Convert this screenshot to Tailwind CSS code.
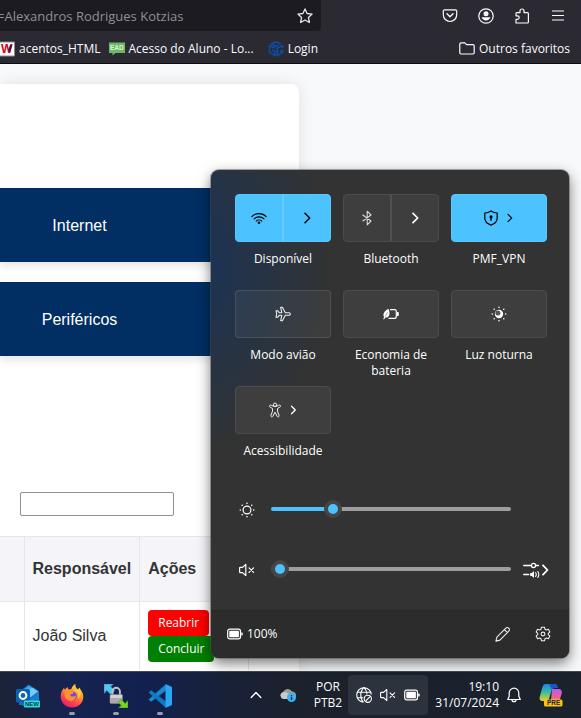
<!DOCTYPE html>
<html lang="pt-BR">
<head>
<meta charset="utf-8">
<meta name="viewport" content="width=device-width, initial-scale=1">
<title>Central de chamados</title>
<script src="https://cdn.jsdelivr.net/npm/@tailwindcss/browser@4"></script>
</head>
<body class="relative flex h-screen flex-col overflow-hidden bg-[#f8f9fa] font-['Open_Sans','Noto_Sans',sans-serif] text-xs">

<!-- Browser toolbar -->
<header class="shrink-0 border-b border-[#0c0c0d] bg-[#2b2a33] text-[#fbfbfe]">
  <div class="flex h-[31px] items-start justify-between pr-[15px]">
    <div class="flex h-[31px] w-[321px] items-center justify-between rounded-br bg-[#1c1b22] pr-2">
      <span class="-ml-[3px] text-[13px] leading-4 text-[#8f8f96]">=Alexandros Rodrigues Kotzias</span>
      <button aria-label="Adicionar aos favoritos">
        <svg class="size-4" viewBox="0 0 16 16" fill="none" stroke="#e4e4e8" stroke-width="1.3" stroke-linejoin="round"><path d="M8 .9l2.1 4.6 5 .6-3.7 3.4 1 5L8 12l-4.400 2.500 1-5L.9 6.100l5-.6z"/></svg>
      </button>
    </div>
    <div class="flex h-[31px] items-center gap-5">
      <button aria-label="Pocket"><svg class="size-4" viewBox="0 0 16 16" fill="none" stroke="#fbfbfe" stroke-width="1.2" stroke-linecap="round" stroke-linejoin="round"><path d="M2.600 1.800h10.800a1.300 1.300 0 0 1 1.300 1.300v3.700a6.700 6.700 0 0 1-13.400 0V3.100a1.300 1.300 0 0 1 1.300-1.300z"/><path d="M5 5.800l3 2.900 3-2.900" stroke-width="1.400"/></svg></button>
      <button aria-label="Conta"><svg class="size-4" viewBox="0 0 16 16"><circle cx="8" cy="8" r="7.200" fill="none" stroke="#fbfbfe" stroke-width="1.200"/><circle cx="8" cy="5.800" r="2.500" fill="#fbfbfe"/><path d="M3.500 9.300h9a4.800 4.800 0 0 1-9 0z" fill="#fbfbfe"/></svg></button>
      <button aria-label="Extensões"><svg class="size-4" viewBox="0 0 16 16" fill="none" stroke="#fbfbfe" stroke-width="1.200" stroke-linejoin="round"><path d="M2 15v-3.600h1.400a1.800 1.800 0 0 0 0-3.600H2V5.600c0-.6.4-1 1-1h3V3a2 2 0 0 1 4 0v1.600h3.400c.6 0 1 .4 1 1V14c0 .6-.4 1-1 1z"/></svg></button>
      <button aria-label="Menu"><svg class="size-4" viewBox="0 0 16 16" stroke="#fbfbfe" stroke-width="1.200"><path d="M2 3h12M2 7.500h12M2 12h12"/></svg></button>
    </div>
  </div>
  <nav class="flex h-8 items-center pr-[11px] pt-1 leading-4">
    <a href="#" class="flex items-center gap-1">
      <svg class="h-4 w-[15px]" viewBox="0 0 15 16"><path d="M-1 1h15.500v14H-1z" fill="#fff" stroke="#8b8b90"/><text x="1" y="12" font-family="Liberation Sans" font-weight="700" font-size="12" fill="#e2001a">W</text><path d="M8.300 8.500L9.800 12l2.700-8.300h-2.300z" fill="#3b1535"/></svg>
      acentos_HTML
    </a>
    <a href="#" class="ml-2 flex items-center gap-1">
      <svg class="size-4" viewBox="0 0 16 16"><path d="M0 1.500h16V12H6.500L3.500 14.500V12H0z" fill="#6db865"/><text x="1" y="9.300" font-family="Liberation Sans" font-weight="700" font-size="6.500" fill="#dff2dc">EAD</text></svg>
      Acesso do Aluno - Lo...
    </a>
    <a href="#" class="ml-[14px] flex items-center gap-1">
      <svg class="size-4" viewBox="0 0 16 16" fill="none" stroke="#0b4fae" stroke-width="1.500" stroke-linejoin="round"><path d="M12.800 3L8 .900 3.200 3 8 5.200l2.400-1.100M7 7.200L1.500 4.600v6.700L7 14.600V10.500L4 9M14.600 7V4.600L9.300 7.200v7.400l5.300-3.300V9.200L12 10.500"/></svg>
      Login
    </a>
    <a href="#" class="ml-auto flex items-center gap-1">
      <svg class="size-4" viewBox="0 0 16 16" fill="none" stroke="#fbfbfe" stroke-width="1.200" stroke-linejoin="round"><path d="M2 1.800h3.800l1.800 1.800H14c.7 0 1.200.5 1.200 1.200v7c0 .7-.5 1.200-1.200 1.200H2c-.7 0-1.200-.5-1.200-1.200V3c0-.7.5-1.200 1.200-1.200z"/></svg>
      Outros favoritos
    </a>
  </nav>
</header>

<!-- Page content -->
<main class="min-h-0 flex-1 overflow-hidden pt-5 font-['Liberation_Sans',Arial,sans-serif] text-base text-[#333]">
  <section class="min-h-full w-[299px] rounded-tr-lg bg-white pt-[104px] shadow-[0_0_15px_rgba(0,0,0,0.1)]">
    <div class="mr-5 flex flex-col gap-5 text-white">
      <a href="#" class="flex h-[74px] items-center justify-center bg-[#012e63] pt-0.5 pr-[120px] shadow-[0_4px_8px_rgba(0,0,0,0.1)]">Internet</a>
      <a href="#" class="flex h-[74px] items-center justify-center bg-[#012e63] pt-0.5 pr-[120px] shadow-[0_4px_8px_rgba(0,0,0,0.1)]">Periféricos</a>
    </div>
    <input type="text" aria-label="Pesquisar" class="mt-[136px] ml-5 block h-6 w-[154px] rounded-xs border border-[#8f8f9d] bg-white px-1 text-sm">
    <table class="mt-5 w-full border-collapse text-left">
      <thead>
        <tr class="h-[65px] bg-[#f4f4f9]">
          <th class="w-6 border-y border-[#e6e6ea]"></th>
          <th class="w-[115px] border border-[#e6e6ea] px-2">Responsável</th>
          <th class="w-[109px] border border-[#e6e6ea] px-2">Ações</th>
          <th class="border-y border-[#e6e6ea]"></th>
        </tr>
      </thead>
      <tbody>
        <tr class="bg-white">
          <td></td>
          <td class="border-x border-[#e6e6ea] px-2">João Silva</td>
          <td class="border-x border-[#e6e6ea] p-2">
            <div class="flex flex-col items-start font-['Open_Sans','Noto_Sans',sans-serif] text-xs text-white">
              <button class="h-[26px] rounded bg-[#ff0000] px-[10px]">Reabrir</button>
              <button class="h-[26px] rounded bg-[#008000] px-[10px]">Concluir</button>
            </div>
          </td>
          <td></td>
        </tr>
      </tbody>
    </table>
  </section>
</main>

<!-- Quick settings flyout -->
<aside class="absolute right-3 bottom-[60px] w-[358px] overflow-hidden rounded-lg bg-[#323332] bg-[radial-gradient(ellipse_140px_190px_at_-20px_95px,#1c3354_0%,#1c3354_10%,#323332_100%)] text-white shadow-[0_0_0_1px_rgba(90,90,90,0.5),0_5px_14px_rgba(0,0,0,0.55)]">
  <div class="grid auto-rows-[96px] grid-cols-3 gap-x-3 pt-6 pr-[22px] pl-6 text-center leading-4">
    <div>
      <div class="flex h-12 overflow-hidden rounded border border-[#5ec6fd] bg-[#4cc2ff] text-black">
        <button aria-label="Wi-Fi" class="flex flex-1 items-center justify-center border-r-2 border-[#66cbff]">
          <svg class="size-4" viewBox="0 0 16 16" fill="none" stroke="currentColor" stroke-width="1.100" stroke-linecap="round"><path d="M.8 6.600a10.200 10.200 0 0 1 14.400 0M3 8.900a7.100 7.100 0 0 1 10 0M5.200 11.100a4 4 0 0 1 5.600 0"/><circle cx="8" cy="12.700" r="1.300" fill="currentColor" stroke="none"/></svg>
        </button>
        <button aria-label="Redes Wi-Fi" class="flex flex-1 items-center justify-center">
          <svg class="size-4" viewBox="0 0 16 16" fill="none" stroke="currentColor" stroke-width="1.500" stroke-linecap="round" stroke-linejoin="round"><path d="M6 3.300L10.700 8 6 12.700"/></svg>
        </button>
      </div>
      <p class="mt-[9px]">Disponível</p>
    </div>
    <div>
      <div class="flex h-12 overflow-hidden rounded border border-[#4b4c4b] bg-[#3d3e3d]">
        <button aria-label="Bluetooth" class="flex flex-1 items-center justify-center border-r-2 border-[#4f504f]">
          <svg class="size-4" viewBox="0 0 16 16" fill="none" stroke="#d8d8d8" stroke-width="1.100" stroke-linejoin="round"><path d="M3.500 4.800L12 11 8.200 14.800V1.200L12 5l-8.500 6.200"/></svg>
        </button>
        <button aria-label="Dispositivos Bluetooth" class="flex flex-1 items-center justify-center">
          <svg class="size-4" viewBox="0 0 16 16" fill="none" stroke="currentColor" stroke-width="1.700" stroke-linecap="round" stroke-linejoin="round"><path d="M6 3.300L10.700 8 6 12.700"/></svg>
        </button>
      </div>
      <p class="mt-[9px]">Bluetooth</p>
    </div>
    <div>
      <button aria-label="VPN" class="flex h-12 w-full items-center justify-center gap-1 rounded border border-[#5ec6fd] bg-[#4cc2ff] pl-1 text-black">
        <svg class="size-4" viewBox="0 0 16 16" fill="none" stroke="currentColor" stroke-width="1.200" stroke-linejoin="round"><path d="M8 .9c1.800 1.300 3.700 2 6.200 2.100V8c0 3.300-2.200 5.700-6.200 7.100C4 13.700 1.800 11.300 1.800 8V3C4.300 2.900 6.200 2.200 8 .9z"/><circle cx="8" cy="6.700" r="1.500" fill="currentColor" stroke="none"/><path d="M8 7v3.700" stroke-width="1.400"/></svg>
        <svg class="size-4" viewBox="0 0 16 16" fill="none" stroke="currentColor" stroke-width="1.100" stroke-linecap="round" stroke-linejoin="round"><path d="M5 4.300L8.700 8 5 11.700"/></svg>
      </button>
      <p class="mt-[9px]">PMF_VPN</p>
    </div>
    <div>
      <button aria-label="Modo avião" class="flex h-12 w-full items-center justify-center rounded border border-white/10 bg-white/5">
        <svg class="size-4" viewBox="0 0 16 16" fill="none" stroke="#f0f0f0" stroke-width="1.100" stroke-linejoin="round"><path d="M14 6.700H10.300L7.400 1.300H5.700L6.800 6.700H4.200L2.600 4.700H1L1.700 8 1 11.300h1.600l1.600-2h2.600l-1.100 5.400h1.700l2.900-5.400H14a1.300 1.300 0 0 0 0-2.600z"/></svg>
      </button>
      <p class="mt-[9px]">Modo avião</p>
    </div>
    <div>
      <button aria-label="Economia de bateria" class="flex h-12 w-full items-center justify-center rounded border border-[#4b4c4b] bg-[#3d3e3d]">
        <svg class="size-4" viewBox="0 0 16 16" fill="none" stroke="#fff" stroke-width="1.200"><path d="M7 3.600h4.600c1 0 1.700.7 1.700 1.700v5.400c0 1-.7 1.700-1.700 1.700H5.500"/><path d="M14 6h.8c.6 0 1 .4 1 1v2c0 .6-.4 1-1 1H14z" fill="#fff" stroke="none"/><path d="M5.300 2.700C2 4.500.4 6.800.4 9c0 .8.300 1.500.7 2L.2 13l.8.500 1.200-1.800c2.900.2 4.300-1.700 4.300-4.400 0-1.800-.5-3.300-1.200-4.600z" fill="#fff" stroke="none"/><path d="M2.200 10.800L4.600 6.300" stroke="#777" stroke-width=".6"/></svg>
      </button>
      <p class="mt-[9px]">Economia de bateria</p>
    </div>
    <div>
      <button aria-label="Luz noturna" class="flex h-12 w-full items-center justify-center rounded border border-[#4b4c4b] bg-[#3d3e3d]">
        <svg class="size-4" viewBox="0 0 16 16"><circle cx="8" cy="8" r="4.200" fill="#fff"/><circle cx="6.900" cy="6.900" r="2.500" fill="#555"/><g fill="#fff"><circle cx="8" cy="1.300" r=".8"/><circle cx="8" cy="14.700" r=".8"/><circle cx="1.300" cy="8" r=".8"/><circle cx="14.700" cy="8" r=".8"/><circle cx="3.200" cy="3.200" r=".8"/><circle cx="12.800" cy="3.200" r=".8"/><circle cx="3.200" cy="12.800" r=".8"/><circle cx="12.800" cy="12.800" r=".8"/></g></svg>
      </button>
      <p class="mt-[9px]">Luz noturna</p>
    </div>
    <div>
      <button aria-label="Acessibilidade" class="flex h-12 w-full items-center justify-center gap-[2px] rounded border border-[#4b4c4b] bg-[#3d3e3d] pl-0.5">
        <svg class="size-4" viewBox="0 0 16 16" fill="none" stroke="#f0f0f0" stroke-width="1" stroke-linejoin="round"><circle cx="8" cy="2.800" r="1.700"/><path d="M2.600 3.600c.4-.7 1-.7 1.700-.3 2.300 1.500 5.100 1.500 7.400 0 .7-.4 1.300-.4 1.700.3s.1 1.200-.5 1.500L10.500 6.500v2.600l1.600 4.500c.3 1.300-1.500 1.800-2 .6L8 10.200l-2.100 4c-.5 1.200-2.300.7-2-.6l1.600-4.500V6.500L3.100 5.100c-.6-.3-.9-.8-.5-1.500z"/></svg>
        <svg class="size-4" viewBox="0 0 16 16" fill="none" stroke="currentColor" stroke-width="1.300" stroke-linecap="round" stroke-linejoin="round"><path d="M6.500 4.200L10.300 8 6.500 11.800"/></svg>
      </button>
      <p class="mt-[9px]">Acessibilidade</p>
    </div>
  </div>

  <div class="flex flex-col gap-1 pb-3 pl-7">
    <div class="flex h-14 items-center">
      <svg class="size-4" viewBox="0 0 16 16" fill="#fff"><circle cx="8" cy="8" r="3.900" fill="none" stroke="#fff" stroke-width="1.200"/><circle cx="8" cy="1.300" r=".8"/><circle cx="8" cy="14.700" r=".8"/><circle cx="1.300" cy="8" r=".8"/><circle cx="14.700" cy="8" r=".8"/><circle cx="3.200" cy="3.200" r=".8"/><circle cx="12.800" cy="3.200" r=".8"/><circle cx="3.200" cy="12.800" r=".8"/><circle cx="12.800" cy="12.800" r=".8"/></svg>
      <input type="range" min="0" max="100" value="24" aria-label="Brilho" style="background-image:linear-gradient(to right,#4cc2ff 26%,#9e9e9e 26%)" class="mb-0.5 ml-4 h-1 w-60 appearance-none rounded-full [&::-webkit-slider-thumb]:size-[18px] [&::-webkit-slider-thumb]:appearance-none [&::-webkit-slider-thumb]:rounded-full [&::-webkit-slider-thumb]:border-4 [&::-webkit-slider-thumb]:border-[#454545] [&::-webkit-slider-thumb]:bg-[#4cc2ff]">
    </div>
    <div class="flex h-14 items-center">
      <svg class="size-4" viewBox="0 0 16 16" fill="none" stroke="#fff" stroke-width="1.200" stroke-linecap="round" stroke-linejoin="round"><path d="M6.800 2.500v11L3.500 10.600H1.200c-.4 0-.6-.2-.6-.6V6c0-.4.2-.6.6-.6h2.300zM10 5.800l4.600 4.600M14.600 5.800L10 10.400"/></svg>
      <input type="range" min="0" max="100" value="0" aria-label="Volume" style="background-image:linear-gradient(to right,#4cc2ff 0%,#9e9e9e 0%)" class="mb-0.5 ml-4 h-1 w-60 appearance-none rounded-full [&::-webkit-slider-thumb]:size-[18px] [&::-webkit-slider-thumb]:appearance-none [&::-webkit-slider-thumb]:rounded-full [&::-webkit-slider-thumb]:border-4 [&::-webkit-slider-thumb]:border-[#454545] [&::-webkit-slider-thumb]:bg-[#4cc2ff]">
      <button aria-label="Saída de som" class="ml-3">
        <svg class="h-4 w-[26px]" viewBox="0 0 26 16" fill="none" stroke="#fff" stroke-width="1.300" stroke-linecap="round" stroke-linejoin="round"><path d="M.7 3.500H8M13 3.500h2.500M.7 12.500h5"/><circle cx="10.500" cy="3.500" r="2.100"/><path d="M7.200 11v3h1.600l2.200 2V9l-2.200 2z" fill="#fff" stroke="none"/><path d="M12.600 10.500c.8 1.200.8 2.800 0 4M14.800 9.500c1.200 1.800 1.200 4.200 0 6" stroke-width="1.100"/><path d="M20 3.300L24.500 8 20 12.700" stroke-width="1.800"/></svg>
      </button>
    </div>
  </div>

  <footer class="flex h-12 items-center border-t border-[#282928] bg-[#2b2c2b] pr-[18px] pb-0.5 pl-4">
    <svg class="h-3 w-4" viewBox="0 0 16 12" fill="none" stroke="#fff" stroke-width="1.200"><rect x=".7" y="1.200" width="12.800" height="9.600" rx="2"/><rect x="2.300" y="2.800" width="9.600" height="6.400" rx=".6" fill="#fff" stroke="none"/><path d="M14.200 4.500h.5c.6 0 1 .4 1 1v1c0 .6-.4 1-1 1h-.5z" fill="#fff" stroke="none"/></svg>
    <span class="ml-1 leading-4">100%</span>
    <button aria-label="Editar configurações rápidas" class="ml-auto"><svg class="size-4" viewBox="0 0 16 16" fill="none" stroke="#eee" stroke-width="1.100" stroke-linejoin="round"><path d="M.9 15.100l1-4 8.900-8.900a2 2 0 0 1 3 3l-8.900 8.900zM9.400 3.600l3 3"/></svg></button>
    <button aria-label="Configurações" class="ml-6"><svg class="size-4" viewBox="0 0 16 16" fill="none" stroke="#eee" stroke-width="1.100" stroke-linejoin="round"><circle cx="8" cy="8" r="1.900"/><path d="M6.500 1.200h3l.5 2.100 1.300.7 2.100-.7 1.500 2.600-1.600 1.500v1.200l1.600 1.500-1.500 2.600-2.100-.7-1.300.7-.5 2.100h-3L6 12.700 4.700 12l-2.100.7-1.500-2.600 1.600-1.500V7.400L1.100 5.900l1.500-2.600 2.100.7L6 3.300z"/></svg></button>
  </footer>
</aside>

<!-- Taskbar -->
<footer class="flex h-[47px] shrink-0 items-center border-t border-[#414a52] bg-[linear-gradient(to_right,#1c2238_0%,#172350_12%,#11204e_25%,#19213a_38%,#1b212d_50%,#1b222c_100%)] pr-[18px] pl-4 text-white">
  <div class="flex h-full gap-5">
    <button aria-label="Outlook" class="flex w-6 flex-col items-center pt-3">
      <svg class="size-6" viewBox="0 0 24 24"><path d="M3 8L12.500.5 23 7v14H3z" fill="#1171c4"/><path d="M7 6l6-4.500 9 6-8 6z" fill="#35a9ec"/><path d="M12 5l5-1 5 3.500-8 6z" fill="#70cdf6"/><path d="M23 8v14H6z" fill="#167fd3"/><rect y="5" width="14" height="13.500" rx="1.500" fill="#0963b4"/><circle cx="7" cy="11.500" r="3.400" fill="none" stroke="#fff" stroke-width="2"/><rect x="8" y="16.500" width="16" height="7" rx="1" fill="#35d9da"/><text x="9" y="22.200" font-family="Liberation Sans" font-weight="700" font-size="6" fill="#003c48">NEW</text></svg>
    </button>
    <button aria-label="Firefox" class="flex w-6 flex-col items-center gap-1 pt-3">
      <svg class="size-6" viewBox="0 0 24 24"><defs><linearGradient id="fx" x1=".8" y1="0" x2=".3" y2="1"><stop offset="0" stop-color="#ffe34d"/><stop offset=".4" stop-color="#ff9a2a"/><stop offset=".75" stop-color="#ff3b50"/><stop offset="1" stop-color="#e21b75"/></linearGradient></defs><path d="M15.500 0c-.6 2.500.8 4 2.400 5.500l1.700-2c.4 2.100 3.700 4.600 3.700 9.200C23.300 19 18.300 23.500 12 23.500S.7 18.700.7 12.500c0-3.800 1.500-6.500 3.400-8.700.2 1 .4 1.600.7 2L7.500 3l.8 2.500 3-.2c.6-2.600 2.200-4.500 4.200-5.300z" fill="url(#fx)"/><circle cx="12.200" cy="12" r="4.600" fill="#7542e5"/><path d="M4.800 6.500c2.500-1.300 4.500-.7 6 1l3 .7c-.3 1.300-1.500 1.900-3.600 2.200.2 2.500 3.900 3 6 .8-.5 4.300-3.800 6.500-7 5.500-4-1.200-5.400-5.600-4.400-10.200z" fill="#ff9230"/><path d="M13.500 6.500c5 .4 6 5 4.300 8.200 3.500-1.900 3.600-6.600 1-9.200z" fill="#ffce3d"/></svg>
      <span class="h-[3px] w-[6px] rounded-full bg-[#9a9eae]"></span>
    </button>
    <button aria-label="WinSCP" class="flex w-6 flex-col items-center gap-1 pt-3">
      <svg class="size-6" viewBox="0 0 24 24"><path d="M0 0h9.500L6.800 2.600l4 4-4 4-4-4L0 9.500z" fill="#58c4ee" stroke="#1e86c0" stroke-width=".6"/><path d="M8.500 11V7.500a3.700 3.700 0 0 1 7.400 0V11" fill="none" stroke="#c2c2c6" stroke-width="1.900"/><rect x="6" y="10.500" width="12.500" height="9" rx="1" fill="#d2d2d4" stroke="#77777b" stroke-width=".6"/><path d="M6.500 14h11.500v5H6.500z" fill="#a9a9ad"/><path d="M24 24h-9.500l2.700-2.600-3-3 3-3 4 4 2.800-2.900z" fill="#7bd326" stroke="#3e8f10" stroke-width=".6"/></svg>
      <span class="h-[3px] w-[6px] rounded-full bg-[#9a9eae]"></span>
    </button>
    <button aria-label="Visual Studio Code" class="flex w-6 flex-col items-center gap-1 pt-3">
      <svg class="size-6" viewBox="0 0 24 24"><path d="M17.800.2L18 6.500 3.800 17.300c-.5.4-1.100.4-1.500 0L.6 15.600z" fill="#1588d2"/><path d="M17.800 23.800L.6 8.400l1.700-1.700c.4-.4 1-.4 1.500 0L18 17.500z" fill="#0f79c4"/><path d="M17.500.1L24 3v18l-6.500 2.900z" fill="#2aa7f1"/></svg>
      <span class="h-[3px] w-[6px] rounded-full bg-[#9a9eae]"></span>
    </button>
  </div>
  <div class="ml-auto flex items-center leading-4">
    <button aria-label="Mostrar ícones ocultos"><svg class="size-4" viewBox="0 0 16 16" fill="none" stroke="#fff" stroke-width="1.400" stroke-linecap="round" stroke-linejoin="round"><path d="M3.200 10.500L8 5.500l4.800 5"/></svg></button>
    <button aria-label="OneDrive" class="ml-4"><svg class="size-4" viewBox="0 0 16 16"><path d="M3.500 12A3.500 3.500 0 0 1 3 5.200 5 5 0 0 1 12 4.500 4 4 0 0 1 14 12z" fill="#9c9c9c"/><path d="M3.500 12A3.500 3.500 0 0 1 3 5.200c2-.7 3.700.2 5.500 1.600L12 12z" fill="#c9c9c9"/><circle cx="11.500" cy="10.500" r="4.500" fill="#3bb3f2"/><path d="M11.500 9.800v3.200M11.500 7.900v1.100" stroke="#123" stroke-width="1.300"/></svg></button>
    <button class="ml-4 w-8 text-center">POR<br>PTB2</button>
    <button aria-label="Rede, volume e bateria" class="ml-1 flex h-10 w-20 items-center justify-center gap-2 rounded bg-[#2c333d]">
      <svg class="size-4" viewBox="0 0 16 16" fill="none" stroke="#fff" stroke-width="1.100"><path d="M15.300 7.500A7.300 7.300 0 1 0 7.500 15.300M1.200 5.200h13.600M1.200 10.700h6M8 .7C3.800 4.200 3.800 11.800 7.500 15.300M8 .7c1.900 1.800 2.900 4 3 6.600"/><circle cx="11.800" cy="11.800" r="3.600"/><path d="M9.300 14.300l5-5"/></svg>
      <svg class="size-4" viewBox="0 0 16 16" fill="none" stroke="#fff" stroke-width="1.100" stroke-linecap="round" stroke-linejoin="round"><path d="M6.800 2.500v11L3.500 10.600H1.200c-.4 0-.6-.2-.6-.6V6c0-.4.2-.6.6-.6h2.300zM10 5.800l4.600 4.600M14.600 5.800L10 10.400"/></svg>
      <svg class="h-3 w-4" viewBox="0 0 16 12" fill="none" stroke="#fff" stroke-width="1.200"><rect x=".7" y="1.200" width="12.800" height="9.600" rx="2"/><rect x="2.300" y="2.800" width="9.600" height="6.400" rx=".6" fill="#fff" stroke="none"/><path d="M14.200 4.500h.5c.6 0 1 .4 1 1v1c0 .6-.4 1-1 1h-.5z" fill="#fff" stroke="none"/></svg>
    </button>
    <button class="ml-1 w-[67px] text-right whitespace-nowrap">19:10<br>31/07/2024</button>
    <button aria-label="Notificações" class="ml-[7px]"><svg class="size-4" viewBox="0 0 16 16" fill="none" stroke="#fff" stroke-width="1.200" stroke-linejoin="round"><path d="M8 1.200a4.800 4.800 0 0 0-4.800 4.800v3.200L1.700 12.500h12.600l-1.500-3.300V6A4.800 4.800 0 0 0 8 1.200zM6 12.700a2 2 0 0 0 4 0"/></svg></button>
    <button aria-label="Copilot" class="ml-[17px]"><svg class="size-6" viewBox="0 0 24 24"><defs><linearGradient id="ca" x1="0" y1="0" x2="0" y2="1"><stop offset="0" stop-color="#1688e8"/><stop offset=".5" stop-color="#3bc09a"/><stop offset="1" stop-color="#f3cb20"/></linearGradient><linearGradient id="cb" x1="0" y1="0" x2="0" y2="1"><stop offset="0" stop-color="#b25cf0"/><stop offset=".6" stop-color="#f0609a"/><stop offset="1" stop-color="#ff9a55"/></linearGradient></defs><path d="M13 6h6.500c2.600 0 4 2 3.200 4.500L21 16c-.8 2.500-2 4-4.500 4H9c2 0 2.500-1.500 3-3z" fill="url(#cb)"/><path d="M6.500 1h9c2 0 2.700 1.500 3.300 4h-3c-2 0-3 1-3.500 3l-2 7c-.6 2-1.500 3-3.500 3H3.500C1 18 0 16 .8 13.500L3.500 4c.6-2 1.500-3 3-3z" fill="url(#ca)"/><path d="M10 1h5.500c2 0 2.700 1.500 3.300 4h-3c-1.400 0-2.300.5-3 1.600z" fill="#1b55c4"/><rect x="5" y="16.500" width="18.500" height="7" rx="1.500" fill="#f8c512"/><text x="8" y="22.300" font-family="Liberation Sans" font-weight="700" font-size="6.500" fill="#2b2200">PRE</text></svg></button>
  </div>
</footer>
</body>
</html>
